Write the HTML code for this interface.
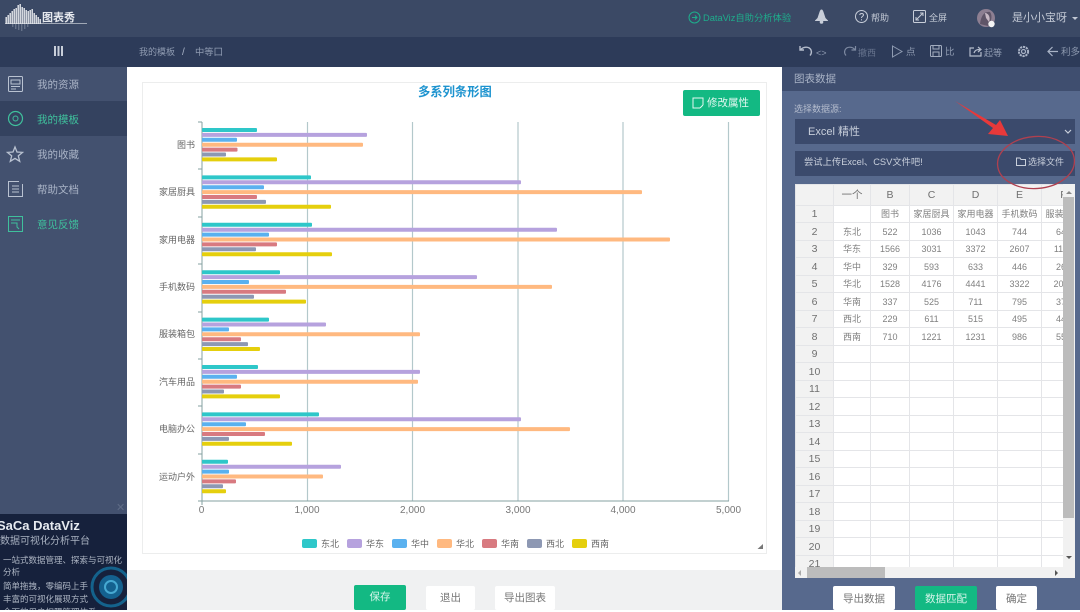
<!DOCTYPE html>
<html lang="zh">
<head>
<meta charset="utf-8">
<title>图表秀</title>
<style>
html,body{margin:0;padding:0;background:#fff}
body{width:1080px;height:610px;position:relative;overflow:hidden;font-family:"Liberation Sans","Noto Sans CJK SC",sans-serif;font-size:10px;filter:blur(.35px)}
.a{position:absolute;white-space:nowrap}
.btn{position:absolute;background:#fff;color:#777;text-align:center;font-size:10.5px;border-radius:2px;box-sizing:border-box}
.green{background:#13b983;color:#d6f5ea}
.nav{position:absolute;left:37px;font-size:10.5px;color:#a9b3c6;line-height:16px}
table{border-collapse:collapse;table-layout:fixed;position:absolute;left:0;top:0}
td{border:1px solid #e4e5e8;padding:0;text-align:center;font-size:9px;line-height:12px;color:#808080;overflow:hidden;white-space:nowrap;box-sizing:border-box;background:#fff}
tr:nth-child(even) td{height:17px}
tr:nth-child(odd) td{height:18px}
td.h{background:#f2f2f2;font-size:10.5px;color:#707070}
svg{position:absolute;overflow:visible}
g[transform] rect{rx:1px}
</style>
</head>
<body>
<!-- header -->
<div class="a" style="left:0;top:0;width:1080px;height:37px;background:#3b4965"></div>
<div class="a" style="left:0;top:37px;width:1080px;height:30px;background:#2d3b59"></div>

<!-- logo -->
<svg style="left:0;top:0" width="100" height="36">
<g fill="#e4e7ec">
<rect x="5.500" y="17" width="1.400" height="7"/><rect x="7.500" y="15" width="1.400" height="9"/><rect x="9.500" y="13" width="1.400" height="11"/><rect x="11.500" y="11" width="1.400" height="13"/><rect x="13.500" y="9" width="1.400" height="15"/><rect x="15.500" y="8" width="1.400" height="16"/><rect x="17.500" y="5" width="1.400" height="19"/><rect x="19.500" y="4" width="1.400" height="20"/><rect x="21.500" y="7" width="1.400" height="17"/><rect x="23.500" y="8" width="1.400" height="16"/><rect x="25.500" y="10" width="1.400" height="14"/><rect x="27.500" y="11" width="1.400" height="13"/><rect x="29.500" y="10" width="1.400" height="14"/><rect x="31.500" y="9" width="1.400" height="15"/><rect x="33.500" y="13" width="1.400" height="11"/><rect x="35.500" y="15" width="1.400" height="9"/><rect x="37.500" y="17" width="1.400" height="7"/><rect x="39.500" y="19" width="1.400" height="5"/>
<rect x="5" y="23" width="82" height="1" opacity=".6"/>
</g>
<g fill="#8a95a8" opacity=".55">
<rect x="12" y="24" width="1.400" height="3"/><rect x="15" y="24" width="1.400" height="5"/><rect x="18" y="24" width="1.400" height="6"/><rect x="21" y="24" width="1.400" height="7"/><rect x="24" y="24" width="1.400" height="5"/><rect x="27" y="24" width="1.400" height="3"/>
</g>
</svg>
<div class="a" style="left:42px;top:10px;font-size:11px;font-weight:bold;color:#e6e9ee;line-height:16px">图表秀</div>

<!-- top right -->
<svg style="left:688px;top:11px" width="14" height="14" fill="none" stroke="#1eae8c" stroke-width="1"><circle cx="6.500" cy="6.500" r="5.500"/><path d="M4 6.500H9M7 4.500L9 6.500L7 8.500"/></svg>
<div class="a" style="left:703px;top:11px;font-size:9.3px;color:#1eae8c;line-height:15px">DataViz自助分析体验</div>
<svg style="left:814px;top:9px" width="15" height="15" fill="#c8ced9"><path d="M7.500 0.500C8.500 0.500 9 1.500 9.500 3L11.500 9L14 11.500V12H1V11.500L3.500 9L5.500 3C6 1.500 6.500 0.500 7.500 0.500Z"/><circle cx="7.500" cy="13" r="1.800"/></svg>
<svg style="left:855px;top:10px" width="14" height="14" fill="none" stroke="#c8ced9"><circle cx="6.500" cy="6.500" r="6"/><path d="M4.700 5C5 3 8.500 3 8.500 5C8.500 6.300 6.500 6.300 6.500 8M6.500 9.200V10.400"/></svg>
<div class="a" style="left:871px;top:11px;color:#c3c9d5;font-size:9px;line-height:15px">帮助</div>
<svg style="left:913px;top:10px" width="14" height="14" fill="none" stroke="#c8ced9"><rect x=".5" y=".5" width="12" height="12" rx="1"/><path d="M3 10L10 3M7 3H10V6M3 7V10H6"/></svg>
<div class="a" style="left:929px;top:11px;color:#c3c9d5;font-size:9px;line-height:15px">全屏</div>
<svg style="left:977px;top:9px" width="20" height="20"><circle cx="9" cy="9" r="9" fill="#8d7f92"/><path d="M3 15C4 6 8 2 13 3C16 7 14 13 11 17Z" fill="#5f5568"/><path d="M8 4C11 4 14 8 12 13L9 9Z" fill="#c7b8c4"/><circle cx="14.500" cy="15" r="3.200" fill="#f4f4f4"/></svg>
<div class="a" style="left:1012px;top:10px;color:#c3c9d5;font-size:11px;line-height:16px">是小小宝呀</div>
<div class="a" style="left:1072px;top:17px;width:0;height:0;border:3px solid transparent;border-top:3px solid #c3c9d5"></div>

<!-- toolbar -->
<svg style="left:54px;top:46px" width="10" height="11" fill="#c9cfda"><rect x="0" y="0" width="2" height="10"/><rect x="3.500" y="0" width="2" height="10"/><rect x="7" y="0" width="2" height="10"/></svg>
<div class="a" style="left:139px;top:45px;color:#8f9bb1;font-size:9px;line-height:15px">我的模板</div>
<div class="a" style="left:182px;top:45px;color:#a9b3c6;font-size:10px;line-height:15px">/</div>
<div class="a" style="left:195px;top:45px;color:#8f9bb1;font-size:9.3px;line-height:15px">中等囗</div>

<svg style="left:799px;top:45px" width="14" height="12" fill="none" stroke="#b4bccb" stroke-width="1.400"><path d="M1 1V5H5M1.500 5C4 1.500 10 1 12 5C12.800 7 12.300 9 11 10.500"/></svg>
<div class="a" style="left:816px;top:47px;color:#8f9bb1;font-size:9px;line-height:12px">&lt;&gt;</div>
<svg style="left:843px;top:45px" width="14" height="12" fill="none" stroke="#7e8aa2" stroke-width="1.200"><path d="M12.500 1V5H8.500M12 5C10 1.500 4 1 2 5C1.200 7 1.700 9 3 10.500"/></svg>
<div class="a" style="left:858px;top:46px;color:#66738d;font-size:9px;line-height:14px">撤西</div>
<svg style="left:891px;top:45px" width="13" height="13" fill="none" stroke="#8f9bb1"><path d="M1.500 1L11 6.500L1.500 12Z"/></svg>
<div class="a" style="left:906px;top:46px;color:#8f9bb1;font-size:9.5px;line-height:14px">点</div>
<svg style="left:930px;top:45px" width="13" height="13" fill="none" stroke="#a2acbe"><rect x=".5" y=".5" width="11" height="11" rx="1"/><path d="M3 1V4H9V1M3 11V7H9V11"/></svg>
<div class="a" style="left:945px;top:46px;color:#8f9bb1;font-size:9.5px;line-height:14px">比</div>
<svg style="left:969px;top:46px" width="14" height="11" fill="none" stroke="#b4bccb" stroke-width="1.200"><path d="M5 2H1V10H12V6"/><path d="M5 7C6 4 8 3.500 11 3.500M9 1L12 3.500L9 6" /></svg>
<div class="a" style="left:984px;top:46px;color:#8f9bb1;font-size:9px;line-height:14px">起等</div>
<svg style="left:1017px;top:45px" width="13" height="13" fill="none" stroke="#a9b3c6" stroke-width="1.200"><circle cx="6.500" cy="6.500" r="2"/><circle cx="6.500" cy="6.500" r="4.600" stroke-dasharray="2.200 .8" stroke-width="2"/></svg>
<svg style="left:1047px;top:46px" width="12" height="11" fill="none" stroke="#a9b3c6" stroke-width="1.200"><path d="M11 5.500H1M5.500 1L1 5.500L5.500 10"/></svg>
<div class="a" style="left:1061px;top:46px;color:#8f9bb1;font-size:9.5px;line-height:14px">利多</div>

<!-- sidebar -->
<div class="a" style="left:0;top:67px;width:127px;height:543px;background:#43516f"></div>
<div class="a" style="left:0;top:101px;width:127px;height:35px;background:#34425f"></div>
<svg style="left:8px;top:76px" width="16" height="17" fill="none" stroke="#b9c2d1"><rect x=".5" y=".5" width="14" height="15" rx="1"/><path d="M3 4H12V8H3ZM3 10.500H12M3 13H8"/></svg>
<div class="nav" style="top:77px">我的资源</div>
<svg style="left:8px;top:111px" width="16" height="16" fill="none" stroke="#3fc09c"><circle cx="7.500" cy="7.500" r="7" stroke-width="1.200"/><circle cx="7.500" cy="7.500" r="2.500"/></svg>
<div class="nav" style="top:112px;color:#3fc09c">我的模板</div>
<svg style="left:7px;top:146px" width="17" height="17" fill="none" stroke="#b9c2d1" stroke-width="1.300"><path d="M8 1L10 6L15.500 6.400L11.300 9.900L12.700 15.300L8 12.400L3.300 15.300L4.700 9.900L.5 6.400L6 6Z"/></svg>
<div class="nav" style="top:147px">我的收藏</div>
<svg style="left:8px;top:181px" width="16" height="17" fill="none" stroke="#b9c2d1"><path d="M11 .5H.5V15.500H14.500V3"/><path d="M4 5H11M4 8H11M4 11H11"/></svg>
<div class="nav" style="top:182px">帮助文档</div>
<svg style="left:8px;top:216px" width="16" height="17" fill="none" stroke="#3fc09c"><rect x=".5" y=".5" width="14" height="15"/><path d="M3 4H12M3 7H9V11L11 13"/></svg>
<div class="nav" style="top:217px;color:#3fc09c">意见反馈</div>

<!-- ad -->
<div class="a" style="left:0;top:514px;width:127px;height:96px;background:#16213c;overflow:hidden">
  <div class="a" style="left:-3px;top:3px;font-size:13px;font-weight:bold;color:#e6eaf0;line-height:17px">SaCa DataViz</div>
  <div class="a" style="left:0;top:21px;font-size:10px;color:#a8b1c0;line-height:14px">数据可视化分析平台</div>
  <div class="a" style="left:3px;top:40px;font-size:8.500px;color:#aeb6c4;line-height:12px">一站式数据管理、探索与可视化<br>分析</div>
  <div class="a" style="left:3px;top:66px;font-size:8.500px;color:#aeb6c4;line-height:12px">简单拖拽，零编码上手</div>
  <div class="a" style="left:3px;top:79px;font-size:8.500px;color:#aeb6c4;line-height:12px">丰富的可视化展现方式</div>
  <div class="a" style="left:3px;top:92px;font-size:8.500px;color:#aeb6c4;line-height:12px">全面的用户权限管理体系</div>
  <svg style="left:90px;top:52px" width="40" height="44" fill="none"><circle cx="21" cy="21" r="19" stroke="#14628c" stroke-width="3"/><circle cx="21" cy="21" r="12" fill="#14618f"/><circle cx="21" cy="21" r="6" stroke="#46a9d2" stroke-width="2"/></svg>
</div>
<div class="a" style="left:116px;top:502px;font-size:11px;color:#5f6c86;line-height:12px">✕</div>

<!-- main -->
<div class="a" style="left:127px;top:67px;width:655px;height:503px;background:#fff"></div>
<div class="a" style="left:127px;top:570px;width:655px;height:40px;background:#f0f1f2"></div>
<div class="a" style="left:142px;top:82px;width:625px;height:472px;border:1px solid #eceded;box-sizing:border-box;background:#fff"></div>

<div class="a" style="left:418px;top:84px;font-size:12.300px;font-weight:bold;color:#1c93cf;line-height:17px">多系列条形图</div>
<div class="a" style="left:683px;top:90px;width:77px;height:26px;background:#13b983;border-radius:2px"></div>
<svg style="left:692px;top:97px" width="13" height="13" fill="none" stroke="#e4f8f1" stroke-width="1"><path d="M11 8V1H1V11H8M8 11L11 8"/></svg>
<div class="a" style="left:707px;top:95px;font-size:10.500px;color:#e4f8f1;line-height:16px">修改属性</div>

<!-- chart -->
<svg style="left:0;top:0" width="1080" height="610">
<g stroke="#b3c8cb" stroke-width="1.200">
<line x1="307.500" y1="122" x2="307.500" y2="501"/><line x1="412.500" y1="122" x2="412.500" y2="501"/><line x1="518" y1="122" x2="518" y2="501"/><line x1="623" y1="122" x2="623" y2="501"/><line x1="728.500" y1="122" x2="728.500" y2="501"/>
</g>
<g stroke="#84a0a2" stroke-width="1">
<line x1="202" y1="122" x2="202" y2="505"/><line x1="198" y1="501" x2="729" y2="501"/>
<line x1="198" y1="122" x2="202" y2="122"/><line x1="198" y1="169" x2="202" y2="169"/><line x1="198" y1="217" x2="202" y2="217"/><line x1="198" y1="264" x2="202" y2="264"/><line x1="198" y1="312" x2="202" y2="312"/><line x1="198" y1="359" x2="202" y2="359"/><line x1="198" y1="406" x2="202" y2="406"/><line x1="198" y1="454" x2="202" y2="454"/>
</g>
<g transform="translate(202,128)"><rect y="0" width="55" height="4" fill="#2ec7c9"/><rect y="4.900" width="165" height="4" fill="#b6a2de"/><rect y="9.800" width="35" height="4" fill="#5ab1ef"/><rect y="14.700" width="161" height="4" fill="#ffb980"/><rect y="19.600" width="35.500" height="4" fill="#d87a80"/><rect y="24.500" width="24" height="4" fill="#8d98b3"/><rect y="29.400" width="75" height="4" fill="#e5cf0d"/></g>
<g transform="translate(202,175.400)"><rect y="0" width="109" height="4" fill="#2ec7c9"/><rect y="4.900" width="319" height="4" fill="#b6a2de"/><rect y="9.800" width="62" height="4" fill="#5ab1ef"/><rect y="14.700" width="440" height="4" fill="#ffb980"/><rect y="19.600" width="55" height="4" fill="#d87a80"/><rect y="24.500" width="64" height="4" fill="#8d98b3"/><rect y="29.400" width="129" height="4" fill="#e5cf0d"/></g>
<g transform="translate(202,222.800)"><rect y="0" width="110" height="4" fill="#2ec7c9"/><rect y="4.900" width="355" height="4" fill="#b6a2de"/><rect y="9.800" width="67" height="4" fill="#5ab1ef"/><rect y="14.700" width="468" height="4" fill="#ffb980"/><rect y="19.600" width="75" height="4" fill="#d87a80"/><rect y="24.500" width="54" height="4" fill="#8d98b3"/><rect y="29.400" width="130" height="4" fill="#e5cf0d"/></g>
<g transform="translate(202,270.200)"><rect y="0" width="78" height="4" fill="#2ec7c9"/><rect y="4.900" width="275" height="4" fill="#b6a2de"/><rect y="9.800" width="47" height="4" fill="#5ab1ef"/><rect y="14.700" width="350" height="4" fill="#ffb980"/><rect y="19.600" width="84" height="4" fill="#d87a80"/><rect y="24.500" width="52" height="4" fill="#8d98b3"/><rect y="29.400" width="104" height="4" fill="#e5cf0d"/></g>
<g transform="translate(202,317.600)"><rect y="0" width="67" height="4" fill="#2ec7c9"/><rect y="4.900" width="124" height="4" fill="#b6a2de"/><rect y="9.800" width="27" height="4" fill="#5ab1ef"/><rect y="14.700" width="218" height="4" fill="#ffb980"/><rect y="19.600" width="39" height="4" fill="#d87a80"/><rect y="24.500" width="46" height="4" fill="#8d98b3"/><rect y="29.400" width="58" height="4" fill="#e5cf0d"/></g>
<g transform="translate(202,365)"><rect y="0" width="56" height="4" fill="#2ec7c9"/><rect y="4.900" width="218" height="4" fill="#b6a2de"/><rect y="9.800" width="35" height="4" fill="#5ab1ef"/><rect y="14.700" width="216" height="4" fill="#ffb980"/><rect y="19.600" width="39" height="4" fill="#d87a80"/><rect y="24.500" width="22" height="4" fill="#8d98b3"/><rect y="29.400" width="78" height="4" fill="#e5cf0d"/></g>
<g transform="translate(202,412.400)"><rect y="0" width="117" height="4" fill="#2ec7c9"/><rect y="4.900" width="319" height="4" fill="#b6a2de"/><rect y="9.800" width="44" height="4" fill="#5ab1ef"/><rect y="14.700" width="368" height="4" fill="#ffb980"/><rect y="19.600" width="63" height="4" fill="#d87a80"/><rect y="24.500" width="27" height="4" fill="#8d98b3"/><rect y="29.400" width="90" height="4" fill="#e5cf0d"/></g>
<g transform="translate(202,459.800)"><rect y="0" width="26" height="4" fill="#2ec7c9"/><rect y="4.900" width="139" height="4" fill="#b6a2de"/><rect y="9.800" width="27" height="4" fill="#5ab1ef"/><rect y="14.700" width="121" height="4" fill="#ffb980"/><rect y="19.600" width="34" height="4" fill="#d87a80"/><rect y="24.500" width="21" height="4" fill="#8d98b3"/><rect y="29.400" width="24" height="4" fill="#e5cf0d"/></g>
<g font-family="'Liberation Sans','Noto Sans CJK SC',sans-serif" font-size="9" fill="#666" text-anchor="end">
<text x="195" y="148">图书</text><text x="195" y="195">家居厨具</text><text x="195" y="243">家用电器</text><text x="195" y="290">手机数码</text><text x="195" y="337">服装箱包</text><text x="195" y="385">汽车用品</text><text x="195" y="432">电脑办公</text><text x="195" y="480">运动户外</text>
</g>
<g font-family="'Liberation Sans','Noto Sans CJK SC',sans-serif" font-size="10" fill="#777" text-anchor="middle">
<text x="201.500" y="513">0</text><text x="307" y="513">1,000</text><text x="412.500" y="513">2,000</text><text x="518" y="513">3,000</text><text x="623" y="513">4,000</text><text x="728.500" y="513">5,000</text>
</g>
<g>
<rect x="302" y="539" width="15" height="9" rx="2" fill="#2ec7c9"/><rect x="347" y="539" width="15" height="9" rx="2" fill="#b6a2de"/><rect x="392" y="539" width="15" height="9" rx="2" fill="#5ab1ef"/><rect x="437" y="539" width="15" height="9" rx="2" fill="#ffb980"/><rect x="482" y="539" width="15" height="9" rx="2" fill="#d87a80"/><rect x="527" y="539" width="15" height="9" rx="2" fill="#8d98b3"/><rect x="572" y="539" width="15" height="9" rx="2" fill="#e5cf0d"/>
</g>
<g font-family="'Liberation Sans','Noto Sans CJK SC',sans-serif" font-size="9" fill="#666">
<text x="321" y="547">东北</text><text x="366" y="547">华东</text><text x="411" y="547">华中</text><text x="456" y="547">华北</text><text x="501" y="547">华南</text><text x="546" y="547">西北</text><text x="591" y="547">西南</text>
</g>
<path d="M763 544V549H757.500Z" fill="#777"/>
</svg>

<!-- bottom buttons -->
<div class="btn green" style="left:354px;top:585px;width:52px;height:25px;line-height:24px">保存</div>
<div class="btn" style="left:426px;top:586px;width:49px;height:24px;line-height:25px">退出</div>
<div class="btn" style="left:495px;top:586px;width:60px;height:24px;line-height:25px">导出图表</div>

<!-- right panel -->
<div class="a" style="left:782px;top:67px;width:298px;height:543px;background:#57698d"></div>
<div class="a" style="left:782px;top:67px;width:298px;height:24px;background:#3f4e6f"></div>
<div class="a" style="left:794px;top:71px;font-size:10.500px;color:#a9b3c6;line-height:16px">图表数据</div>
<div class="a" style="left:794px;top:102px;font-size:9px;color:#b4bccd;line-height:14px">选择数据源:</div>
<div class="a" style="left:795px;top:119px;width:280px;height:25px;background:#3b4a6c"></div>
<div class="a" style="left:808px;top:124px;font-size:11px;color:#c8cfdb;line-height:16px">Excel 精性</div>
<svg style="left:1064px;top:129px" width="8" height="6" fill="none" stroke="#c8cfdb" stroke-width="1.200"><path d="M1 1L4 4L7 1"/></svg>
<div class="a" style="left:795px;top:151px;width:280px;height:25px;background:#3b4a6c"></div>
<div class="a" style="left:804px;top:155px;font-size:9.300px;color:#c8cfdb;line-height:15px">尝试上传Excel、CSV文件吧!</div>
<svg style="left:1016px;top:157px" width="11" height="10" fill="none" stroke="#c8cfdb"><path d="M.5 8.500V1H4L5 2.500H9.500V8.500Z"/></svg>
<div class="a" style="left:1028px;top:155px;font-size:9px;color:#c8cfdb;line-height:15px">选择文件</div>

<!-- table -->
<div class="a" style="left:795px;top:184px;width:280px;height:394px;background:#fff;overflow:hidden">
<table style="width:290px">
<colgroup><col style="width:38px"><col style="width:37px"><col style="width:39px"><col style="width:44px"><col style="width:44px"><col style="width:44px"><col style="width:44px"></colgroup>
<tr style="height:21px"><td class="h"></td><td class="h">一个</td><td class="h">B</td><td class="h">C</td><td class="h">D</td><td class="h">E</td><td class="h">F</td></tr>
<tr><td class="h">1</td><td></td><td>图书</td><td>家居厨具</td><td>家用电器</td><td>手机数码</td><td>服装箱包</td></tr>
<tr><td class="h">2</td><td>东北</td><td>522</td><td>1036</td><td>1043</td><td>744</td><td>640</td></tr>
<tr><td class="h">3</td><td>华东</td><td>1566</td><td>3031</td><td>3372</td><td>2607</td><td>1181</td></tr>
<tr><td class="h">4</td><td>华中</td><td>329</td><td>593</td><td>633</td><td>446</td><td>260</td></tr>
<tr><td class="h">5</td><td>华北</td><td>1528</td><td>4176</td><td>4441</td><td>3322</td><td>2074</td></tr>
<tr><td class="h">6</td><td>华南</td><td>337</td><td>525</td><td>711</td><td>795</td><td>371</td></tr>
<tr><td class="h">7</td><td>西北</td><td>229</td><td>611</td><td>515</td><td>495</td><td>440</td></tr>
<tr><td class="h">8</td><td>西南</td><td>710</td><td>1221</td><td>1231</td><td>986</td><td>550</td></tr>
<tr><td class="h">9</td><td></td><td></td><td></td><td></td><td></td><td></td></tr>
<tr><td class="h">10</td><td></td><td></td><td></td><td></td><td></td><td></td></tr>
<tr><td class="h">11</td><td></td><td></td><td></td><td></td><td></td><td></td></tr>
<tr><td class="h">12</td><td></td><td></td><td></td><td></td><td></td><td></td></tr>
<tr><td class="h">13</td><td></td><td></td><td></td><td></td><td></td><td></td></tr>
<tr><td class="h">14</td><td></td><td></td><td></td><td></td><td></td><td></td></tr>
<tr><td class="h">15</td><td></td><td></td><td></td><td></td><td></td><td></td></tr>
<tr><td class="h">16</td><td></td><td></td><td></td><td></td><td></td><td></td></tr>
<tr><td class="h">17</td><td></td><td></td><td></td><td></td><td></td><td></td></tr>
<tr><td class="h">18</td><td></td><td></td><td></td><td></td><td></td><td></td></tr>
<tr><td class="h">19</td><td></td><td></td><td></td><td></td><td></td><td></td></tr>
<tr><td class="h">20</td><td></td><td></td><td></td><td></td><td></td><td></td></tr>
<tr><td class="h">21</td><td></td><td></td><td></td><td></td><td></td><td></td></tr>
</table>
<!-- scrollbars -->
<div class="a" style="left:268px;top:0;width:12px;height:394px;background:#f1f1f1"></div>
<div class="a" style="left:268px;top:13px;width:11px;height:321px;background:#bcbcbc"></div>
<div class="a" style="left:271px;top:4px;width:0;height:0;border:3px solid transparent;border-bottom:3px solid #888"></div>
<div class="a" style="left:271px;top:372px;width:0;height:0;border:3px solid transparent;border-top:3px solid #555"></div>
<div class="a" style="left:0;top:383px;width:280px;height:11px;background:#f1f1f1"></div>
<div class="a" style="left:12px;top:383px;width:78px;height:11px;background:#bcbcbc"></div>
<div class="a" style="left:3px;top:386px;width:0;height:0;border:3px solid transparent;border-right:3px solid #aaa;border-left:0"></div>
<div class="a" style="left:260px;top:386px;width:0;height:0;border:3px solid transparent;border-left:3px solid #555;border-right:0"></div>
</div>

<div class="btn" style="left:833px;top:586px;width:62px;height:24px;line-height:26px">导出数据</div>
<div class="btn green" style="left:915px;top:586px;width:62px;height:24px;line-height:26px">数据匹配</div>
<div class="btn" style="left:996px;top:586px;width:41px;height:24px;line-height:26px">确定</div>

<!-- annotations -->
<svg style="left:0;top:0" width="1080" height="610">
<path d="M955 101L996 125L1000 120L1008 136L988 134L993 128Z" fill="#e8393a"/>
<ellipse cx="1036" cy="162.500" rx="38.500" ry="26" transform="rotate(-4 1036 162.500)" fill="none" stroke="#b0404f" stroke-width="1.300"/>
</svg>
</body>
</html>
